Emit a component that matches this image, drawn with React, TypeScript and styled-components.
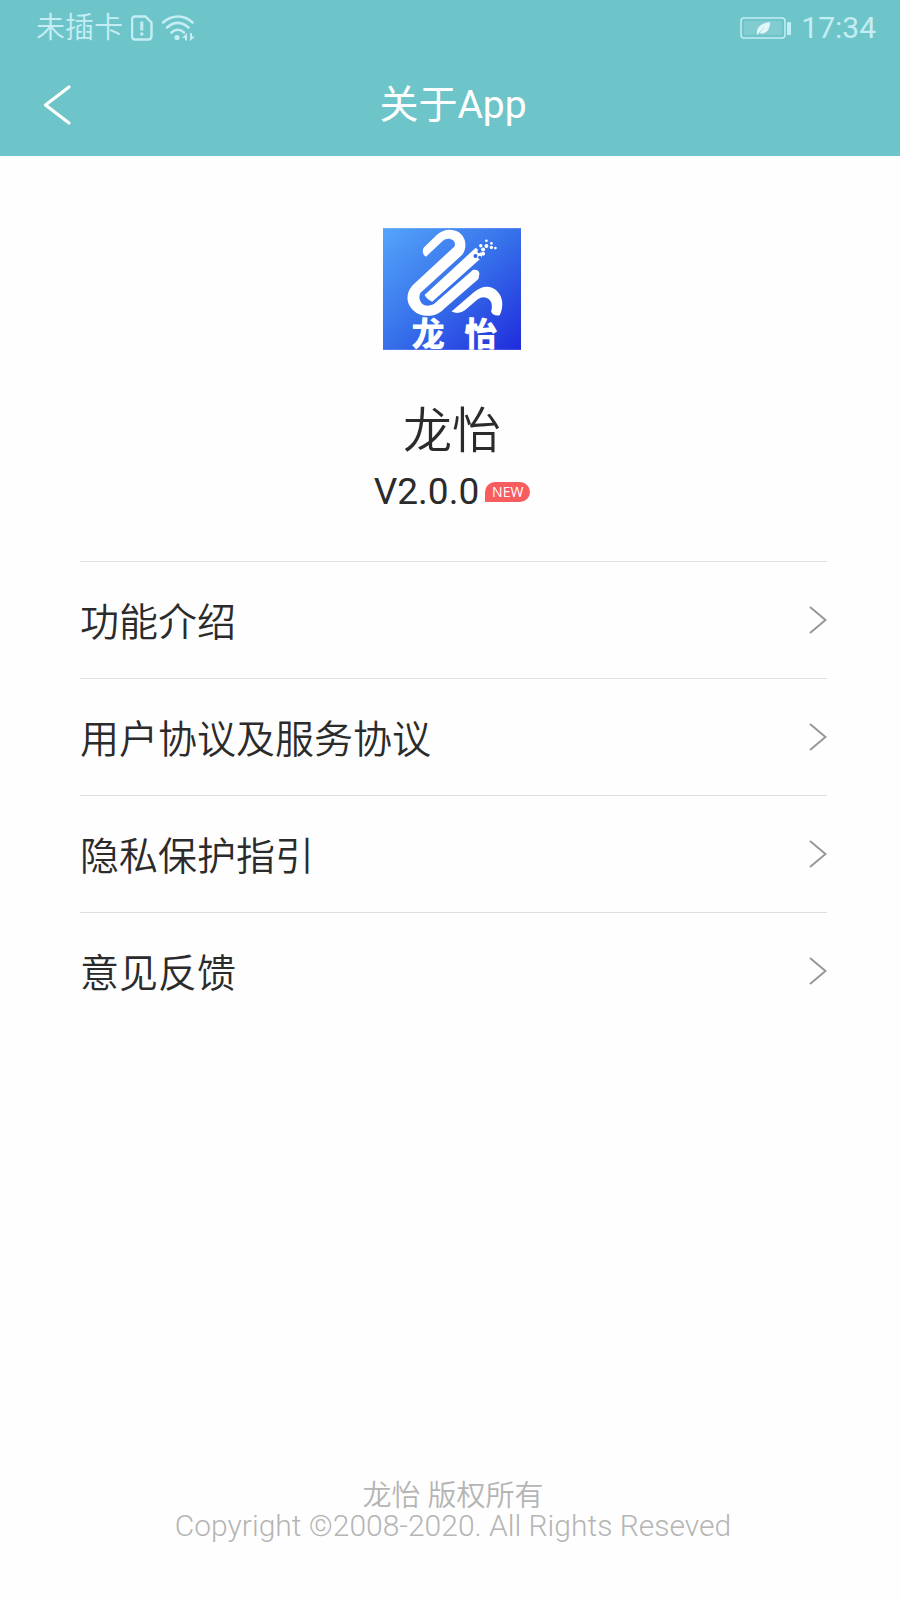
import React from "react";
import styled, { createGlobalStyle } from "styled-components";

const GlobalStyle = createGlobalStyle`
  * { box-sizing: border-box; }
  body {
    margin: 0;
    background: #fefefe;
    color: #2b2b2b;
    font-family: Roboto, "Noto Sans CJK SC", sans-serif;
    font-weight: 350;
  }
`;

const Page = styled.div`
  min-height: 100vh;
  display: flex;
  flex-direction: column;
`;

const Header = styled.header`
  background: #6ec5c9;
  color: #fff;
`;

const StatusBar = styled.div`
  display: flex;
  justify-content: space-between;
  align-items: center;
  height: 56px;
  padding: 0 24px 0 36px;
  color: #c4eef3;
  font-size: 29px;
  line-height: 32px;
`;

const StatusGroup = styled.div<{ $gap: number }>`
  display: flex;
  align-items: center;
  gap: ${(p) => p.$gap}px;
`;

const Clock = styled.time`
  font-size: 30px;
  font-weight: 400;
`;

const TitleBar = styled.div`
  display: grid;
  grid-template-columns: 80px 1fr 80px;
  align-items: center;
  height: 100px;
  padding: 0 0 2px 6px;
`;

const BackButton = styled.button`
  display: flex;
  padding: 0 0 0 36px;
  border: 0;
  background: none;
  color: inherit;
  cursor: pointer;
`;

const Title = styled.h1`
  margin: 0;
  text-align: center;
  font-size: 39px;
  font-weight: 400;
  line-height: 48px;
`;

const Main = styled.main`
  flex: 1;
  padding: 72px 73px 0 80px;
`;

const AppInfo = styled.section`
  display: flex;
  flex-direction: column;
  align-items: center;
  padding: 0 3px 45px 0;
`;

const AppName = styled.h2`
  margin: 52px 0 0;
  font-size: 49px;
  font-weight: 350;
  line-height: 60px;
`;

const Version = styled.p`
  display: flex;
  align-items: center;
  gap: 6px;
  margin: 6px 0 0;
  font-size: 37px;
  font-weight: 400;
  line-height: 48px;
`;

const NewBadge = styled.span`
  width: 45px;
  height: 20px;
  border-radius: 10px 10px 10px 0;
  background: #f75c5f;
  color: #fff;
  font-family: "Open Sans", sans-serif;
  font-size: 14px;
  line-height: 20px;
  text-align: center;
`;

const Menu = styled.ul`
  margin: 0;
  padding: 0;
  list-style: none;
`;

const MenuItem = styled.li`
  border-top: 1px solid #dedede;
`;

const MenuLink = styled.a`
  display: flex;
  align-items: center;
  justify-content: space-between;
  height: 116px;
  color: inherit;
  font-size: 39px;
  line-height: 48px;
  text-decoration: none;
`;

const MenuLabel = styled.span`
  padding-top: 6px;
`;

const Footer = styled.footer`
  padding: 0 0 59px 6px;
  color: #b5b5b5;
  text-align: center;
  line-height: 30px;
`;

const Owner = styled.p`
  margin: 0;
  font-size: 29px;
`;

const Copyright = styled.p`
  margin: 0;
  font-size: 30px;
`;

const SimIcon = () => (
  <svg width="22" height="26" viewBox="0 0 22 26" fill="none" stroke="currentColor" strokeWidth="2.4">
    <path d="M4 1.500h10.500l6 6v14a3 3 0 0 1-3 3H4a3 3 0 0 1-3-3v-17a3 3 0 0 1 3-3z" strokeLinejoin="round" />
    <path d="M10.800 6.500v9" strokeWidth="3" />
    <circle cx="10.800" cy="19" r="1.700" fill="currentColor" stroke="none" />
  </svg>
);

const WifiIcon = () => (
  <svg width="34" height="26" viewBox="0 0 34 26" fill="none" stroke="currentColor" strokeWidth="2.6" strokeLinecap="round">
    <path d="M2 7.500C11 -.5 23 -.5 31.500 7.500M6 12.500c7-6 14.500-6 21.500 0M10.500 17.500c4-3.500 8.500-3.500 12.500 0" />
    <circle cx="16" cy="22.500" r="2.600" fill="currentColor" stroke="none" />
    <path d="M21 23l5-5v7.500h-2v-2.500zM34 21.500l-5 4.500v-8h2v3.500z" fill="currentColor" stroke="none" />
  </svg>
);

const BatteryIcon = () => (
  <svg width="51" height="22" viewBox="0 0 51 22" fill="none">
    <rect x="1" y="1" width="44" height="20" rx="3" stroke="currentColor" strokeWidth="1.500" />
    <rect x="4" y="4" width="38" height="14" fill="#80ccd1" />
    <path d="M17 17c-1-7 5-11 13-12 0 8-4 13-11 11l-2 2z" fill="#e2f7f7" />
    <path d="M18 17l6-6" stroke="#a5dce0" strokeWidth="1" />
    <rect x="47" y="5" width="4" height="13" rx="1" fill="currentColor" />
  </svg>
);

const BackIcon = () => (
  <svg width="30" height="42" viewBox="0 0 30 42" fill="none" stroke="currentColor" strokeWidth="3.2" strokeLinecap="round" strokeLinejoin="round">
    <path d="M27 3L3.500 21l23.500 18" />
  </svg>
);

const ChevronIcon = () => (
  <svg width="18" height="28" viewBox="0 0 18 28" fill="none" stroke="#979797" strokeWidth="2" aria-hidden="true">
    <path d="M1 1l15.500 13L1 27" />
  </svg>
);

const LogoFrame = styled.svg`
  display: block;
  overflow: visible;
`;

const LogoText = styled.text`
  font-family: "Noto Sans CJK SC", sans-serif;
  font-size: 100px;
  font-weight: 900;
  fill: #fff;
`;

const Logo = () => (
  <LogoFrame width="138" height="122" viewBox="39 41 415 366" role="img" aria-label="龙怡">
    <defs>
      <linearGradient id="logo-bg" x1="0" y1="0" x2="1" y2="1">
        <stop offset="0" stopColor="#55a5fb" />
        <stop offset="0.5" stopColor="#3670ea" />
        <stop offset="1" stopColor="#202bdc" />
      </linearGradient>
    </defs>
    <rect x="39" y="41" width="415" height="366" fill="url(#logo-bg)" />
    <g fill="#fff">
      <path d="M168 127C158 121 156 106 162 99L202 60C222 42 250 42 268 54C290 70 292 100 278 120L152 235C144 248 150 268 165 273C178 276 190 272 198 264L310 166Q328 164 329 178L326 194L222 284C200 308 165 310 140 296C108 275 104 240 128 213L254 96C259 84 250 73 235 73Q226 73 220 78Z" />
      <path d="M164 242L318 100L338 118L335 130L187 262Q173 257 164 242Z" />
      <path d="M245 292L312 234C336 213 362 212 381 229C401 248 402 278 390 303C378 305 367 302 364 291C370 275 366 256 350 250Q336 246 324 255L285 288Q267 302 245 292Z" />
    </g>
    <g fill="#3566e8">
      <circle cx="317" cy="125" r="6" />
      <circle cx="330" cy="129" r="5" />
      <circle cx="328" cy="111" r="5" />
    </g>
    <g fill="#fff">
      <circle cx="333" cy="94" r="5" />
      <circle cx="340" cy="105" r="6" />
      <circle cx="340" cy="118" r="6" />
      <circle cx="350" cy="95" r="6" />
      <circle cx="350" cy="79" r="4" />
      <circle cx="365" cy="87" r="4" />
      <circle cx="365" cy="99" r="5" />
      <circle cx="377" cy="101" r="4" />
    </g>
    <LogoText x="125" y="394">龙</LogoText>
    <LogoText x="283" y="394">怡</LogoText>
  </LogoFrame>
);

const menuItems = ["功能介绍", "用户协议及服务协议", "隐私保护指引", "意见反馈"];

export default function App() {
  return (
    <Page lang="zh-CN">
      <GlobalStyle />
      <Header>
        <StatusBar>
          <StatusGroup $gap={8}>
            <span>未插卡</span>
            <SimIcon />
            <WifiIcon />
          </StatusGroup>
          <StatusGroup $gap={10}>
            <BatteryIcon />
            <Clock>17:34</Clock>
          </StatusGroup>
        </StatusBar>
        <TitleBar>
          <BackButton type="button" aria-label="返回">
            <BackIcon />
          </BackButton>
          <Title>关于App</Title>
        </TitleBar>
      </Header>
      <Main>
        <AppInfo>
          <Logo />
          <AppName>龙怡</AppName>
          <Version>
            V2.0.0 <NewBadge>NEW</NewBadge>
          </Version>
        </AppInfo>
        <Menu>
          {menuItems.map((label) => (
            <MenuItem key={label}>
              <MenuLink href="#">
                <MenuLabel>{label}</MenuLabel>
                <ChevronIcon />
              </MenuLink>
            </MenuItem>
          ))}
        </Menu>
      </Main>
      <Footer>
        <Owner>龙怡 版权所有</Owner>
        <Copyright>Copyright ©2008-2020. All Rights Reseved</Copyright>
      </Footer>
    </Page>
  );
}
